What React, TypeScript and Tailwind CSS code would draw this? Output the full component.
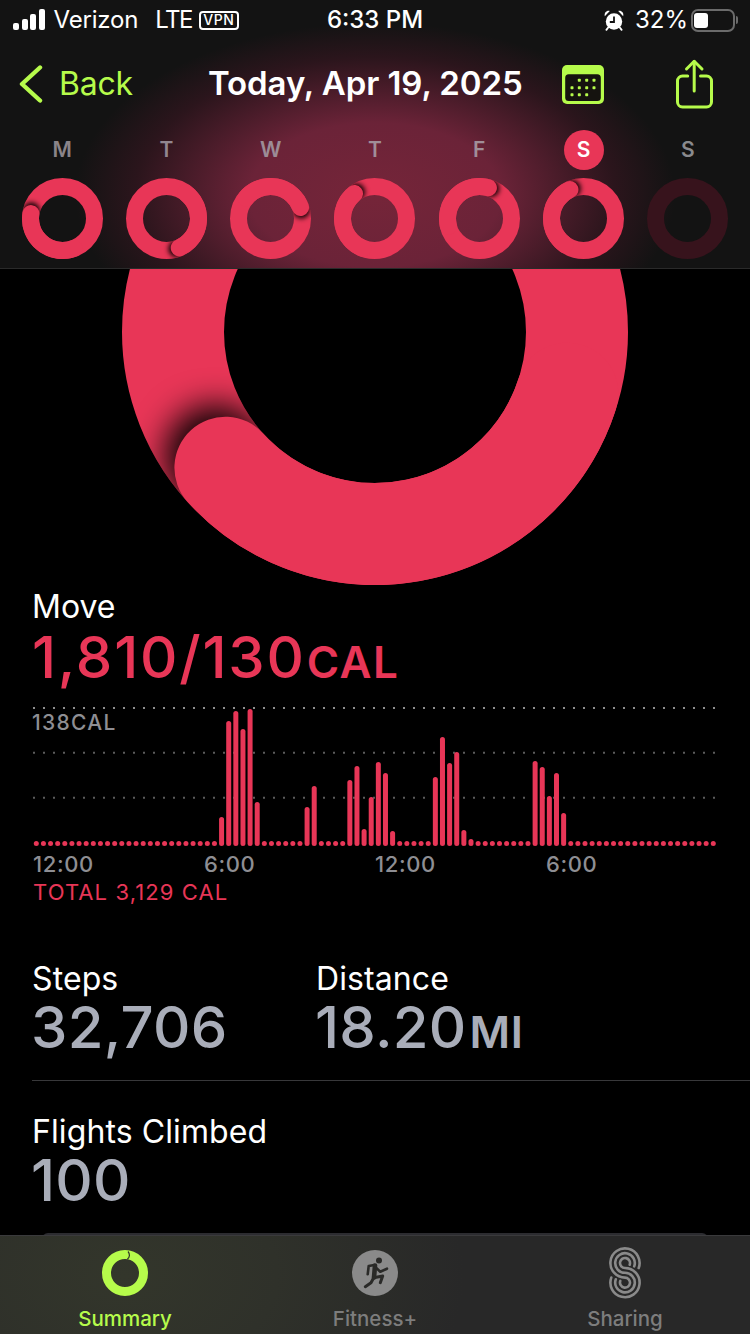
import React from "react";

const PINK = "#e83657";
const LIME = "#b6fb4b";
const FONT = "font-['Inter','Liberation_Sans',sans-serif]";

type RingProps = { id: string; size: number; stroke: number; dx?: number; dy?: number; color?: string };

function Ring({ id, size, stroke, dx, dy, color = PINK }: RingProps) {
  const c = size / 2;
  const r = c - stroke / 2;
  const hasHead = dx !== undefined && dy !== undefined;
  const a = hasHead ? Math.atan2(dy as number, dx as number) : 0;
  const hx = c + r * Math.cos(a);
  const hy = c + r * Math.sin(a);
  const t = a - (2 * Math.PI) / 3;
  const tx = c + r * Math.cos(t);
  const ty = c + r * Math.sin(t);
  const fa = a + (stroke / r) * 0.15;
  const sx = c + r * Math.cos(fa);
  const sy = c + r * Math.sin(fa);
  return (
    <svg width={size} height={size} viewBox={`0 0 ${size} ${size}`} className="block shrink-0">
      <defs>
        <filter id={`${id}-b`} x="-100%" y="-100%" width="300%" height="300%">
          <feGaussianBlur stdDeviation={stroke * 0.16} />
        </filter>
        <mask id={`${id}-m`} maskUnits="userSpaceOnUse" x="0" y="0" width={size} height={size}>
          <circle cx={c} cy={c} r={r} fill="none" stroke="#fff" strokeWidth={stroke} />
        </mask>
      </defs>
      <circle cx={c} cy={c} r={r} fill="none" stroke={color} strokeWidth={stroke} />
      {hasHead && (
        <>
          <g mask={`url(#${id}-m)`}>
            <circle cx={sx} cy={sy} r={stroke * 0.5} fill="#000" fillOpacity="0.95" filter={`url(#${id}-b)`} />
          </g>
          <path
            d={`M ${tx} ${ty} A ${r} ${r} 0 0 1 ${hx} ${hy}`}
            fill="none"
            stroke={color}
            strokeWidth={stroke}
            strokeLinecap="round"
          />
        </>
      )}
    </svg>
  );
}

const days: { l: string; dx?: number; dy?: number; active?: boolean; dim?: boolean; tone: string }[] = [
  { l: "M", dx: -32, dy: -5, tone: "text-[#8a8489]" },
  { l: "T", dx: 13, dy: 30, tone: "text-[#918690]" },
  { l: "W", dx: 30, dy: -11, tone: "text-[#9c8c96]" },
  { l: "T", dx: -20, dy: -25, tone: "text-[#a08e98]" },
  { l: "F", dx: 9, dy: -31, tone: "text-[#a08e98]" },
  { l: "S", dx: -14, dy: -30, active: true, tone: "text-white" },
  { l: "S", dim: true, tone: "text-[#8a8a8e]" },
];

const heights: Record<number, number> = {
  26: 29, 27: 125, 28: 135, 29: 117, 30: 137, 31: 44,
  38: 39, 39: 60,
  44: 66, 45: 80, 46: 17, 47: 49, 48: 84, 49: 73, 50: 15,
  56: 69, 57: 109, 58: 83, 59: 94, 60: 16, 61: 7,
  70: 85, 71: 79, 72: 50, 73: 73, 74: 33,
};

function Chart() {
  const bars = Array.from({ length: 96 }, (_, i) => heights[i] ?? 5);
  return (
    <svg width="750" height="142" viewBox="0 0 750 142" className="block">
      <line x1="33" x2="716" y1="2" y2="2" stroke="#8f8f8f" strokeWidth="2" strokeDasharray="2 8" />
      <line x1="33" x2="716" y1="46.7" y2="46.7" stroke="#5c5c5c" strokeWidth="2" strokeDasharray="2 8" />
      <line x1="33" x2="716" y1="91.7" y2="91.7" stroke="#5c5c5c" strokeWidth="2" strokeDasharray="2 8" />
      {bars.map((h, i) => (
        <rect key={i} x={33.8 + i * 7.126} y={140 - h} width="5" height={h} rx="2.5" fill={PINK} />
      ))}
    </svg>
  );
}

function Alarm() {
  return (
    <svg width="20" height="21" viewBox="0 0 20 21" className="block">
      <circle cx="10" cy="11.5" r="8.2" fill="#fff" />
      <path d="M10 6.5v5.5H5.8" fill="none" stroke="#131313" strokeWidth="1.8" />
      <path d="M.8 6.2C0 2.8 2.6.2 5.8 1z" fill="#fff" />
      <path d="M19.2 6.2C20 2.8 17.4.2 14.2 1z" fill="#fff" />
      <path d="M4.2 17.5l-1.8 2.4M15.8 17.5l1.8 2.4" stroke="#fff" strokeWidth="1.8" strokeLinecap="round" />
    </svg>
  );
}

function CalendarIcon() {
  const dots = [
    [17.3, 15.3], [24.7, 15.3], [32, 15.3],
    [10, 22.7], [17.3, 22.7], [24.7, 22.7], [32, 22.7],
    [10, 29.7], [17.3, 29.7], [24.7, 29.7],
  ];
  return (
    <svg width="42" height="39" viewBox="0 0 42 39" className="block">
      <rect width="42" height="39" rx="5" fill={LIME} />
      <rect x="3.2" y="9.3" width="35.6" height="26.6" rx="3.5" fill="#15130f" />
      {dots.map(([x, y], i) => (
        <rect key={i} x={x - 1.5} y={y - 1.5} width="3" height="3" rx="0.8" fill={LIME} />
      ))}
    </svg>
  );
}

function ShareIcon() {
  return (
    <svg width="39" height="50" viewBox="0 0 39 50" fill="none" stroke={LIME} strokeWidth="3" strokeLinecap="round" strokeLinejoin="round" className="block">
      <path d="M12.7 17H7.5a5 5 0 0 0-5 5v21a5 5 0 0 0 5 5h24a5 5 0 0 0 5-5V22a5 5 0 0 0-5-5H25.5" />
      <path d="M19.2 2.5V32" />
      <path d="M11.5 10l7.7-7.7L27 10" />
    </svg>
  );
}

function SharingIcon() {
  const s = (r: number) => {
    const R = 19.6 - r;
    const k = Math.cos(0.35);
    const q = Math.sin(0.35);
    return `M ${16 + r * k} ${16 + r * q} A ${r} ${r} 0 1 0 16 ${16 + r} A ${R} ${R} 0 1 1 ${16 - R * k} ${35.6 - R * q}`;
  };
  return (
    <svg width="32" height="52" viewBox="0 0 32 52" fill="none" stroke="#8a8a8a" strokeWidth="2.6" strokeLinecap="round" className="block">
      <path d={s(14.6)} />
      <path d={s(9.8)} />
      <path d={s(5)} />
    </svg>
  );
}

function RunnerIcon() {
  return (
    <svg width="46" height="46" viewBox="0 0 46 46" fill="none" stroke="#2a2a28" strokeLinecap="round" strokeLinejoin="round" className="block">
      <circle cx="27" cy="10.5" r="3" fill="#2a2a28" stroke="none" />
      <path d="M23 15.5l-1 12" strokeWidth="4.6" />
      <path d="M22.3 15l-5.6 1-1 8.3" strokeWidth="2.6" />
      <path d="M24 17.7l4.3 4L35 18.7" strokeWidth="2.6" />
      <path d="M21.7 27.7l9 -1.7-2.4 6.7" strokeWidth="3" />
      <path d="M21.7 27.7L19 32.7l-5.7 4" strokeWidth="3" />
    </svg>
  );
}

function Stat({ label, value, unit }: { label: string; value: string; unit?: string }) {
  return (
    <div>
      <div className="text-[32px] leading-[40px] tracking-[0.1px] text-white">{label}</div>
      <div className="-mt-[2px] -ml-[1px] text-[58px] leading-[60px] font-medium tracking-[0.3px] whitespace-nowrap text-[#a9adb9]">
        {value}
        {unit && <span className="ml-[3px] text-[44px] leading-none font-semibold tracking-[0.5px]">{unit}</span>}
      </div>
    </div>
  );
}

export default function App() {
  return (
    <div className={`${FONT} relative flex h-[1334px] w-[750px] flex-col overflow-hidden bg-black`}>
      <header className="h-[269px] shrink-0 border-b border-[#2a2a2a] bg-[#131313] bg-[radial-gradient(ellipse_300px_172px_at_375px_195px,#752539_0%,#6b2338_42%,#2b151c_80%,#131313_100%)]">
        <div className="grid h-[40px] grid-cols-[1fr_auto_1fr] items-center text-[24px] text-white">
          <div className="flex items-center pl-[13px]">
            <div className="flex items-end gap-[2.5px] pb-[1px]">
              <div className="h-[7px] w-[6px] rounded-[2px] bg-white" />
              <div className="h-[11px] w-[6px] rounded-[2px] bg-white" />
              <div className="h-[16px] w-[6px] rounded-[2px] bg-white" />
              <div className="h-[21px] w-[6px] rounded-[2px] bg-white" />
            </div>
            <span className="ml-[9px] tracking-[-0.2px]">Verizon</span>
            <span className="ml-[17px] tracking-[-1.5px]">LTE</span>
            <span className="ml-[7px] flex h-[19px] w-[40px] items-center justify-center rounded-[4px] border-2 border-white text-[14px] leading-none font-medium tracking-[0.5px]">
              VPN
            </span>
          </div>
          <div className="font-medium">6:33 PM</div>
          <div className="flex items-center justify-end pr-[12px]">
            <Alarm />
            <span className="ml-[11px]">32%</span>
            <div className="ml-[3px] flex h-[23px] w-[44px] items-center rounded-[7px] border-2 border-[#6b6b6b] pl-[1px]">
              <div className="h-[15px] w-[14px] rounded-[3px] bg-white" />
            </div>
            <div className="ml-[1px] h-[8px] w-[2px] rounded-r-full bg-[#6b6b6b]" />
          </div>
        </div>

        <div className="flex h-[88px] items-center pl-[19px]">
          <div className="flex w-[189px] items-center">
            <svg width="24" height="38" viewBox="0 0 24 38" fill="none" stroke={LIME} strokeWidth="4.4" strokeLinecap="round" strokeLinejoin="round" className="block">
              <path d="M21 2.5L3 19l18 16.5" />
            </svg>
            <span className="ml-[16px] text-[32px] tracking-[-0.2px] text-[#b6fb4b]">Back</span>
          </div>
          <div className="w-[354px] text-[33px] font-semibold tracking-[-0.1px] whitespace-nowrap text-white">Today, Apr 19, 2025</div>
          <div className="w-[113px]">
            <CalendarIcon />
          </div>
          <ShareIcon />
        </div>

        <div className="grid grid-cols-7 px-[10px] pt-[2px]">
          {days.map((d, i) => (
            <div key={i} className="flex flex-col items-center">
              <div
                className={
                  d.active
                    ? `flex h-[40px] w-[40px] items-center justify-center rounded-full bg-[#e83657] text-[21px] font-semibold ${d.tone}`
                    : `flex h-[40px] w-[40px] items-center justify-center text-[21px] font-semibold ${d.tone}`
                }
              >
                {d.l}
              </div>
              <div className="mt-[8px]">
                <Ring id={`d${i}`} size={81} stroke={17} dx={d.dx} dy={d.dy} color={d.dim ? "#37131c" : PINK} />
              </div>
            </div>
          ))}
        </div>
      </header>

      <main className="min-h-0 flex-1 overflow-hidden text-white">
        <div className="flex h-[317px] justify-center overflow-hidden">
          <div className="-mt-[190px]">
            <Ring id="big" size={506} stroke={102} dx={-151} dy={137} />
          </div>
        </div>

        <div className="mt-px pl-[32px] text-[32px] leading-[40px]">Move</div>
        <div className="pl-[32px] text-[58px] leading-[60px] font-medium tracking-[1.8px] whitespace-nowrap text-[#e83657]">
          1,810/130
          <span className="ml-[1px] text-[44px] leading-none font-semibold tracking-[1.5px]">CAL</span>
        </div>

        <div className="relative mt-[19px]">
          <Chart />
          <div className="absolute top-[5px] left-[32px] text-[21px] leading-[24px] font-medium tracking-[1.3px] text-[#8e8e93]">138CAL</div>
        </div>

        <div className="mt-[2px] grid grid-cols-4 px-[33px] text-[22px] leading-[28px] font-medium tracking-[0.6px] text-[#8e8e93]">
          <span>12:00</span>
          <span>6:00</span>
          <span>12:00</span>
          <span>6:00</span>
        </div>
        <div className="pl-[33px] text-[22px] leading-[28px] tracking-[1.1px] text-[#e83657]">TOTAL 3,129 CAL</div>

        <div className="mt-[53px] flex pl-[32px]">
          <div className="w-[284px]">
            <Stat label="Steps" value="32,706" />
          </div>
          <Stat label="Distance" value="18.20" unit="MI" />
        </div>
        <div className="mt-[23px] ml-[32px] h-px bg-[#38383a]" />
        <div className="mt-[31px] pl-[32px]">
          <Stat label="Flights Climbed" value="100" />
        </div>
        <div className="mx-[42px] mt-[23px] h-[6px] rounded-t-[12px] bg-[#2c2c30]" />
      </main>

      <nav className="grid h-[99px] shrink-0 grid-cols-3 border-t border-[#3a3a3c] bg-[#282828] bg-[radial-gradient(ellipse_340px_220px_at_124px_40px,#33362b_0%,#2f312a_45%,#282828_100%)] pt-[11px]">
        <div className="flex flex-col items-center">
          <div className="flex h-[52px] items-center">
            <svg width="46" height="46" viewBox="0 0 46 46" className="block">
              <circle cx="23" cy="23" r="18.5" fill="none" stroke={LIME} strokeWidth="9" />
              <path d="M26 1.5c2 2.4 2 5.6-.6 7.6" fill="none" stroke="#30332b" strokeWidth="1.2" />
            </svg>
          </div>
          <span className="mt-[6px] text-[20.5px] leading-[28px] font-medium text-[#b6fb4b]">Summary</span>
        </div>
        <div className="flex flex-col items-center">
          <div className="flex h-[52px] items-center">
            <div className="h-[46px] w-[46px] rounded-full bg-[#8a8a8a]">
              <RunnerIcon />
            </div>
          </div>
          <span className="mt-[6px] text-[20.5px] leading-[28px] font-medium text-[#7d7d7d]">Fitness+</span>
        </div>
        <div className="flex flex-col items-center">
          <div className="flex h-[52px] items-center">
            <SharingIcon />
          </div>
          <span className="mt-[6px] text-[20.5px] leading-[28px] font-medium text-[#7d7d7d]">Sharing</span>
        </div>
      </nav>
    </div>
  );
}
